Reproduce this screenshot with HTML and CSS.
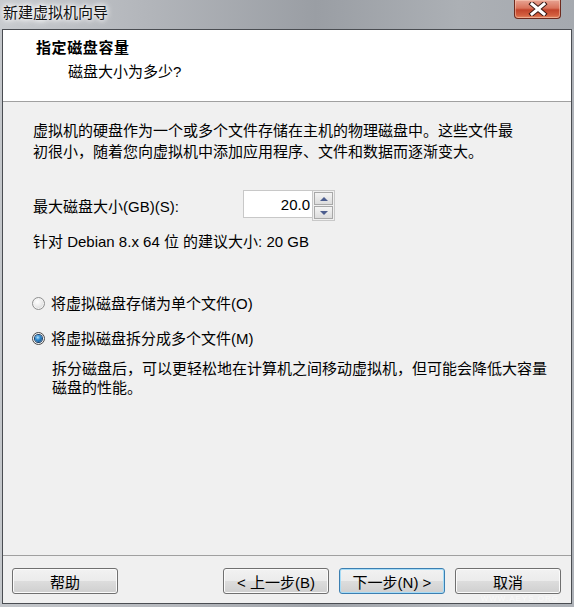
FILE: index.html
```html
<!DOCTYPE html>
<html lang="zh-CN">
<head>
  <meta charset="UTF-8" />
  <title>新建虚拟机向导</title>
  <link rel="stylesheet" href="styles.css">
</head>
<body>
  <div class="window">
    <div class="titlebar">
      <span class="title">新建虚拟机向导</span>
      <span class="close-btn">
        <svg width="20" height="14" viewBox="0 0 20 14">
          <path d="M4 2 L16 12 M16 2 L4 12" stroke="#3a1a14" stroke-width="5" stroke-linecap="square"/>
          <path d="M4 2 L16 12 M16 2 L4 12" stroke="#fff" stroke-width="3" stroke-linecap="square"/>
        </svg>
      </span>
    </div>

    <div class="client">
      <div class="header">
        <div class="header-title">指定磁盘容量</div>
        <div class="header-sub">磁盘大小为多少?</div>
      </div>

      <div class="content">
        <p class="intro">虚拟机的硬盘作为一个或多个文件存储在主机的物理磁盘中。这些文件最初很小，随着您向虚拟机中添加应用程序、文件和数据而逐渐变大。</p>

        <div class="size-row">
          <label class="size-label">最大磁盘大小(GB)(S):</label>
          <div class="spin">
            <input class="spin-input" type="text" value="20.0">
            <div class="spin-buttons">
              <span class="spin-btn"><span class="tri-up"></span></span>
              <span class="spin-btn"><span class="tri-down"></span></span>
            </div>
          </div>
        </div>

        <div class="hint">针对 Debian 8.x 64 位 的建议大小: 20 GB</div>

        <label class="radio-row first">
          <span class="radio"></span>
          <span>将虚拟磁盘存储为单个文件(O)</span>
        </label>
        <label class="radio-row">
          <span class="radio checked"></span>
          <span>将虚拟磁盘拆分成多个文件(M)</span>
        </label>
        <p class="desc">拆分磁盘后，可以更轻松地在计算机之间移动虚拟机，但可能会降低大容量磁盘的性能。</p>
      </div>

      <div class="footer">
        <button class="btn">帮助</button>
        <div class="nav-buttons">
          <button class="btn">&lt; 上一步(B)</button>
          <button class="btn default">下一步(N) &gt;</button>
          <button class="btn">取消</button>
        </div>
        <span class="watermark">WWW.AEYS.ORG</span>
      </div>
    </div>
  </div>
</body>
</html>
```

FILE: styles.css
```css
body {
  margin: 0;
  font-family: "Liberation Sans", "Noto Sans CJK SC", sans-serif;
  font-size: 15px;
  color: #000;
}
.window {
  width: 574px;
  height: 607px;
  display: flex;
  flex-direction: column;
  background: linear-gradient(90deg, #c4c7cb 0%, #b6b9be 30%, #9fa3a9 55%, #b3b7bc 80%, #aeb2b8 100%);
}
.titlebar {
  height: 29px;
  display: flex;
  justify-content: space-between;
  align-items: flex-start;
  background: linear-gradient(90deg, #c8cbcf 0%, #b3b6bb 25%, #9a9ea4 55%, #acb0b5 80%, #a5a9af 100%);
}
.title {
  margin: 3px 0 0 3px;
  font-size: 15px;
  line-height: 20px;
  color: #111;
  text-shadow: 0 0 4px #fff, 0 0 6px #fff, 0 0 8px rgba(255,255,255,0.8);
}
.close-btn {
  width: 45px;
  height: 18px;
  margin-right: 13px;
  border: 1px solid #6e2a1e;
  border-top: none;
  border-radius: 0 0 4px 4px;
  background: linear-gradient(180deg, #e8a493 0%, #d9735b 45%, #c2442b 55%, #d35f3f 85%, #e48a64 100%);
  box-shadow: inset 0 0 0 1px rgba(255,220,200,0.45);
  display: flex;
  align-items: center;
  justify-content: center;
}

.client {
  flex: 1;
  margin: 0 2px 3px 2px;
  border: 1px solid #4a4d52;
  background: #f0f0f0;
  display: flex;
  flex-direction: column;
}
.header {
  height: 72px;
  box-sizing: border-box;
  background: #fff;
  border-bottom: 1px solid #a0a0a0;
}
.header-title {
  margin: 8px 0 0 33px;
  font-weight: bold;
  font-size: 15px;
  letter-spacing: 0.6px;
  line-height: 20px;
}
.header-sub {
  margin: 4px 0 0 65px;
  line-height: 20px;
}

.content {
  padding: 18px 30px 0 30px;
}
.intro {
  margin: 0;
  line-height: 21px;
  width: 490px;
}
.size-row {
  display: flex;
  align-items: center;
  margin-top: 28px;
}
.size-label {
  width: 210px;
}
.spin {
  display: flex;
}
.spin-input {
  width: 69px;
  height: 28px;
  box-sizing: border-box;
  border: 1px solid #c8c8c8;
  border-right: none;
  padding: 0 2px 0 0;
  text-align: right;
  font: inherit;
  font-size: 15px;
  background: #fff;
  color: #000;
}
.spin-buttons {
  display: flex;
  flex-direction: column;
  border: 1px solid #c8c8c8;
  padding: 1px;
  gap: 1px;
  background: #f0f0f0;
}
.spin-btn {
  width: 17px;
  height: 11px;
  border: 1px solid #a8a8a8;
  background: linear-gradient(180deg, #f4f4f4, #dcdcdc);
  display: flex;
  align-items: center;
  justify-content: center;
}
.tri-up {
  border-left: 4px solid transparent;
  border-right: 4px solid transparent;
  border-bottom: 4px solid #4c5d8e;
}
.tri-down {
  border-left: 4px solid transparent;
  border-right: 4px solid transparent;
  border-top: 4px solid #4c5d8e;
}
.hint {
  margin-top: 10px;
  line-height: 21px;
}
.radio-row {
  display: flex;
  align-items: center;
  gap: 6px;
  line-height: 21px;
  margin-top: 14px;
  margin-left: -1px;
}
.radio-row.first {
  margin-top: 41px;
}
.radio {
  width: 13px;
  height: 13px;
  box-sizing: border-box;
  border: 1px solid #8e8f8f;
  border-radius: 50%;
  background: radial-gradient(circle at 40% 35%, #ffffff 0%, #ececec 45%, #c9c9c9 100%);
  box-shadow: inset 0 0 0 1px #f4f4f4;
  display: flex;
  align-items: center;
  justify-content: center;
}
.radio.checked {
  border-color: #4a4a4a;
}
.radio.checked::after {
  content: "";
  width: 7px;
  height: 7px;
  border-radius: 50%;
  background: radial-gradient(circle at 40% 35%, #b4e2fb 0%, #2b8ad2 40%, #103f73 100%);
  box-shadow: 0 0 0 1px #1b3f66;
}
.desc {
  margin: 10px 0 0 19px;
  line-height: 19px;
  width: 500px;
}

.footer {
  margin-top: auto;
  border-top: 1px solid #a0a0a0;
  padding: 12px 10px 9px 9px;
  display: flex;
  justify-content: space-between;
  position: relative;
}
.nav-buttons {
  display: flex;
  gap: 10px;
}
.btn {
  width: 106px;
  height: 26px;
  font: inherit;
  font-size: 15px;
  color: #000;
  border: 1px solid #707070;
  border-radius: 3px;
  background: linear-gradient(180deg, #f2f2f2 0%, #ebebeb 49%, #dddddd 50%, #cfcfcf 100%);
  box-shadow: inset 0 0 0 1px #fbfbfb;
  padding: 0;
}
.btn.default {
  border-color: #3c7fb1;
  box-shadow: inset 0 0 0 1px #a6dcf7;
}
.watermark {
  position: absolute;
  right: 12px;
  bottom: 0;
  font-size: 8px;
  line-height: 9px;
  letter-spacing: 1px;
  color: rgba(255,255,255,0.6);
}
```
